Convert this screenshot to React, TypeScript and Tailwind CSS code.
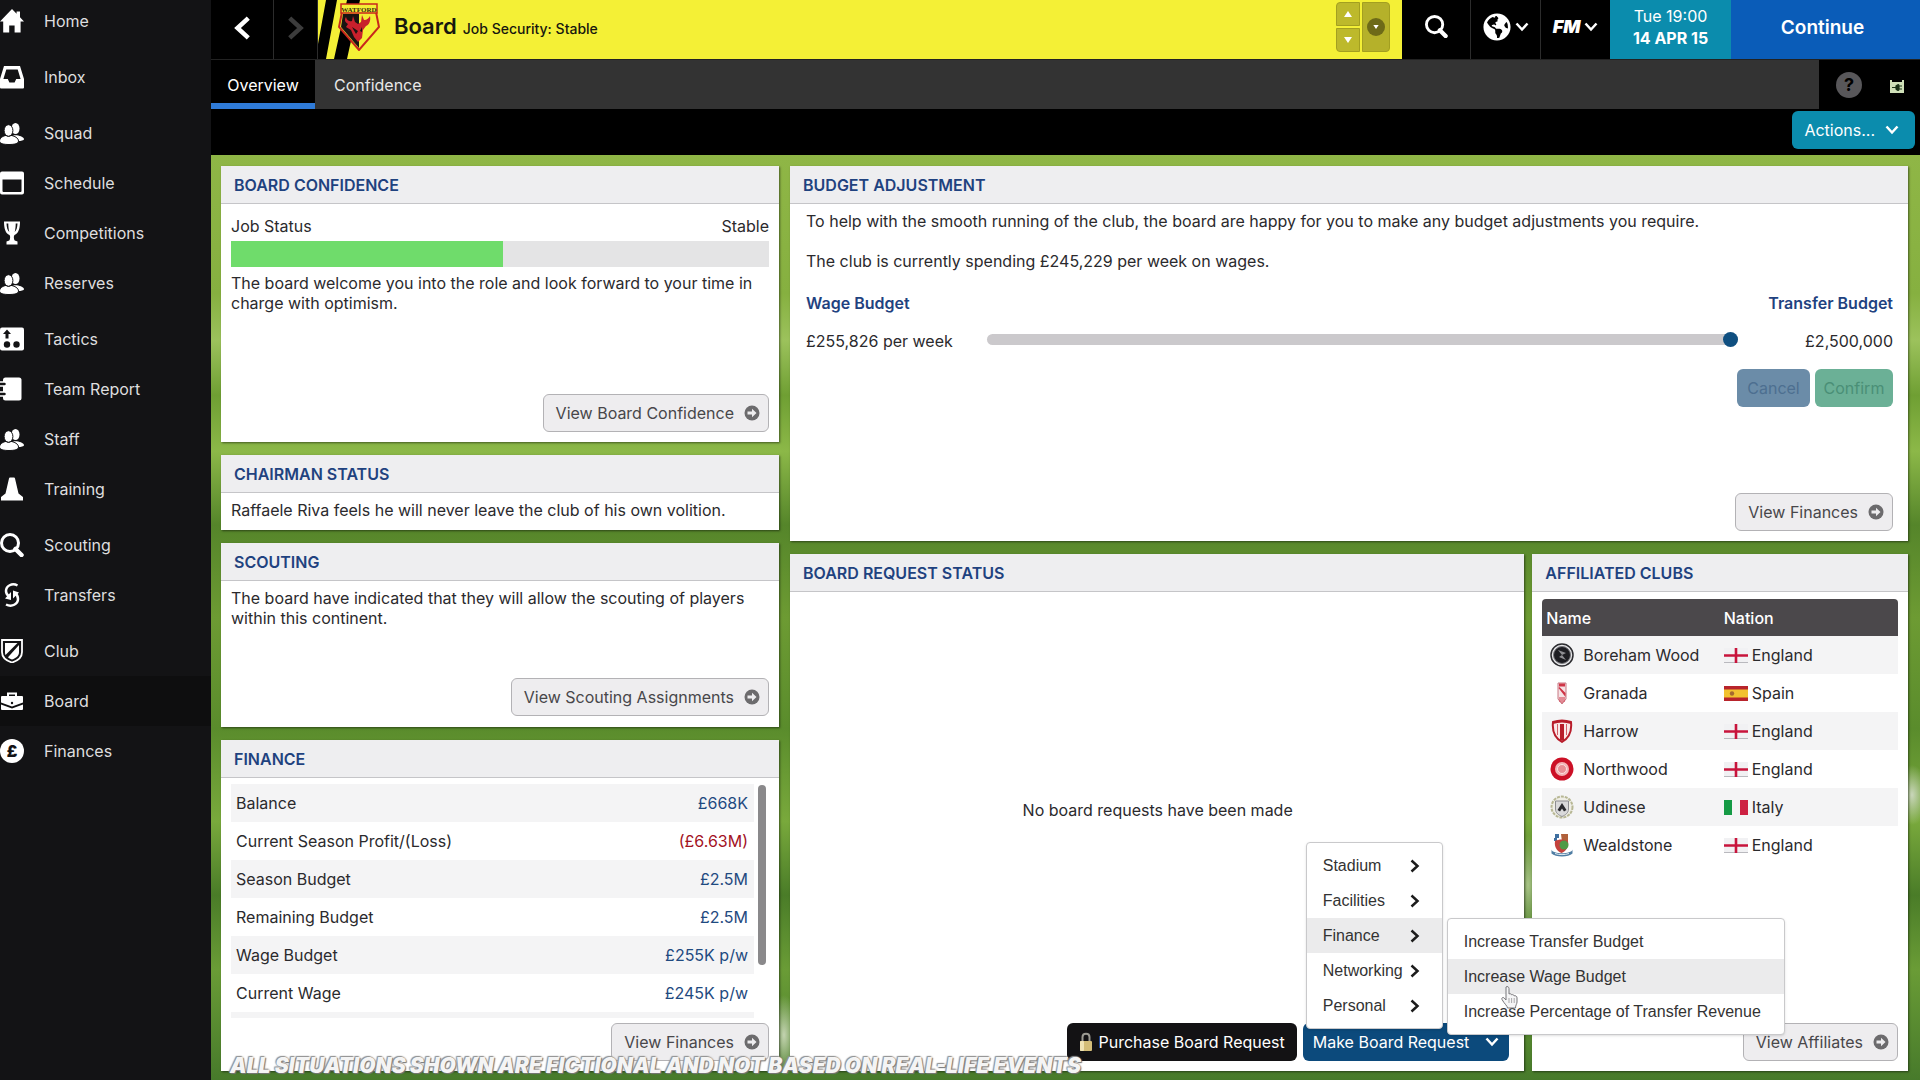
import React from 'react';
import clsx from 'clsx';
import { FaGlobeAmericas } from 'react-icons/fa';

interface IconProps {
    className?: string;
}

const HomeIcon = () => (
    <svg viewBox="0 0 24 24" className="h-6 w-6" fill="currentColor">
        <path d="M12 0 0 12.5h3.2V23.5h6v-7h5.4v7h6V12.5H24L20 8.2V2.5h-3.4v2.2z" />
    </svg>
);

const InboxIcon = () => (
    <svg viewBox="0 0 24 24" className="h-6 w-6" fill="currentColor" fillRule="evenodd">
        <path d="M4 1h16l4 13v8.5q0 1-1 1H1q-1 0-1-1V14zM6.3 4.5 3.4 14h4.4l1.6 3.4h5.2L16.2 14h4.4L17.7 4.5z" />
    </svg>
);

const PeopleIcon = () => (
    <svg viewBox="0 0 24 24" className="h-6 w-6" fill="currentColor">
        <ellipse cx="15.5" cy="7.5" rx="4" ry="5.5" />
        <path d="M13 14.5c4-1 10.5 1 11 3.5 0 1.6-3 2-6 2z" />
        <g stroke="#131315" strokeWidth="1">
            <ellipse cx="8.5" cy="9.5" rx="4.4" ry="5.8" />
            <path d="M-.5 20c0-3 3.5-5 6.5-5.6 1.5 1.4 3.5 1.4 5 0 3.5.6 7.5 2.6 7.5 5.6 0 2.6-4 3.5-9.5 3.5S-.5 22.6-.5 20z" />
        </g>
    </svg>
);

const CalendarIcon = () => (
    <svg viewBox="0 0 24 24" className="h-6 w-6" fill="currentColor" fillRule="evenodd">
        <path d="M2 .5h20q2 0 2 2v19q0 2-2 2H2q-2 0-2-2v-19q0-2 2-2zM2.5 8.5v11.5q0 1 1 1h17q1 0 1-1V8.5z" />
    </svg>
);

const TrophyIcon = () => (
    <svg viewBox="0 0 24 24" className="h-6 w-6" fill="currentColor" fillRule="evenodd">
        <path d="M4 .5h16c0 7-1.5 12-5.5 13.5-1 1-.8 4 .2 5.5l2.8 1V23.5h-11v-3l2.8-1c1-1.500 1.200-4.500.2-5.500C5.500 12.500 4 7.500 4 .5zM6.500 2.500c.2 4 1 7 2.800 8.500-.8-3-1-6-1-8.500zM15.700 2.500c0 2.500-.2 5.500-1 8.500 1.800-1.500 2.600-4.500 2.800-8.500z" />
    </svg>
);

const TacticsIcon = () => (
    <svg viewBox="0 0 24 24" className="h-6 w-6">
        <rect y=".5" width="24" height="23" rx="2" fill="currentColor" />
        <g fill="#131315">
            <path d="M7 2.500 11 7H8.500v4.500h-3V7H3z" />
            <circle cx="7" cy="17.5" r="3.2" />
            <circle cx="16.5" cy="17.5" r="3.2" />
        </g>
    </svg>
);

const ReportIcon = () => (
    <svg viewBox="0 0 24 24" className="h-6 w-6">
        <rect x="3" y=".5" width="18.5" height="23" rx="2.5" fill="currentColor" />
        <g fill="#131315" stroke="currentColor" strokeWidth="1.5">
            <rect x="-2" y="5" width="8.5" height="4" rx="2" />
            <rect x="-2" y="15" width="8.5" height="4" rx="2" />
        </g>
    </svg>
);

const ConeIcon = () => (
    <svg viewBox="0 0 24 24" className="h-6 w-6" fill="currentColor">
        <path d="M10 .5h4q.8 0 1 1l3.5 15 4.5 3.5v3.5H1V20l4.5-3.5L9 1.5q.2-1 1-1z" />
    </svg>
);

const SearchIcon = ({ className }: IconProps) => (
    <svg viewBox="0 0 24 24" className={className} fill="none" stroke="currentColor">
        <circle cx="10" cy="10" r="8.5" strokeWidth="3" />
        <path d="m15.5 16 6 6" strokeWidth="4.5" strokeLinecap="round" />
    </svg>
);

const TransferIcon = () => (
    <svg viewBox="0 0 24 24" className="h-6 w-6" fill="none" stroke="currentColor" strokeWidth="2.5">
        <path d="M17.5 2.5C12-.5 6 3 6 8c0 2.5 1 4 3 5.5" />
        <path d="M6 21.5c6 3 12-.5 12-5.5 0-3-1-4.5-3-6" />
        <path d="M5 15.5 11 17V9zM19 9.5 13 7.5v8z" fill="currentColor" stroke="none" />
    </svg>
);

const ShieldIcon = () => (
    <svg viewBox="0 0 24 24" className="h-6 w-6">
        <path d="M2 1h20v12c0 5-3.5 8.5-10 10.5C5.5 21.5 2 18 2 13z" fill="none" stroke="currentColor" strokeWidth="1.8" />
        <path d="M5 4h12.5L5.500 16C5 15 5 14 5 12.500z" fill="currentColor" />
        <path d="M19 6v7c0 4-3 6-7 7.500-2-.7-3-1.300-4-2.200z" fill="currentColor" />
    </svg>
);

const BriefcaseIcon = () => (
    <svg viewBox="0 0 24 24" className="h-6 w-6">
        <path d="M8 7V4.500h8V7" fill="none" stroke="currentColor" strokeWidth="2" />
        <path d="M2 7h20q1 0 1 1v5.500L12 17.500 1 13.500V8q0-1 1-1z" fill="currentColor" />
        <path d="M1 15.500 12 19.500 23 15.500V20q0 1-1 1H2q-1 0-1-1z" fill="currentColor" />
        <circle cx="12" cy="14" r="1.2" fill="#131315" />
    </svg>
);

const PoundIcon = () => (
    <span className="flex h-6 w-6 items-center justify-center rounded-full bg-current">
        <span className="font-black text-[#131315]">£</span>
    </span>
);

const Chevron = ({ className }: IconProps) => (
    <svg viewBox="0 0 14 10" className={className} fill="none" stroke="currentColor" strokeWidth="2.5">
        <path d="m1.500 1.500 5.500 6 5.500-6" />
    </svg>
);

const ArrowCircle = () => (
    <svg viewBox="0 0 16 16" className="h-4 w-4 shrink-0">
        <circle cx="8" cy="8" r="7.5" fill="#6c6b6d" />
        <path d="M3.500 6.500H8V3.800L12.500 8 8 12.200V9.500H3.500z" fill="#eeedef" />
    </svg>
);

const WatfordCrest = () => (
    <svg viewBox="0 0 42 48" className="h-12 w-[42px] shrink-0">
        <path d="M4 9h34l3 15-20 23L1 24z" fill="#f4ef35" stroke="#c8271c" strokeWidth="2" />
        <path d="M5 11h16v34L3 24z" fill="#1a1412" />
        <path d="M8 14c1 4 4 5 6 4l1-5 2 6 3 2 3-2 1-7 2 5c3 0 5-2 6-4 1 5-1 9-4 10l-3 4-1 8-4 4-4-5-3-7-5-3 2-3c-3-2-4-4-2-7z" fill="#c8202c" />
        <path d="M14 24l6 4-2 3zM24 24l-2 4 2 1z" fill="#1a1412" />
        <rect x="3" y="1" width="36" height="9" fill="#f4ef35" stroke="#c8271c" strokeWidth="1.5" />
        <text x="21" y="8.5" textAnchor="middle" fontSize="7" fontWeight="700" fontFamily="Liberation Serif, serif" fill="#3a2c10">
            WATFORD
        </text>
    </svg>
);

const Padlock = () => (
    <svg viewBox="0 0 14 20" className="h-5 w-[14px] shrink-0">
        <path d="M3.500 10V5c0-4.500 7-4.500 7 0v5" fill="none" stroke="#9b9a92" strokeWidth="2" />
        <rect x="1" y="9" width="12" height="10" rx="1" fill="#d3bd78" />
        <rect x="1" y="9" width="4" height="10" rx="1" fill="#efe3b4" />
    </svg>
);

const HandCursor = () => (
    <svg viewBox="0 0 20 24" className="pointer-events-none absolute top-[26px] left-[52px] z-10 h-6 w-5">
        <path
            d="M6 2c1.200-1.200 3 0 3 1.500V9c1-.6 2.300-.2 2.600.8 1-.5 2.300 0 2.500 1 1.300-.4 2.900.3 2.900 2V17c0 2-1.500 3-1.500 6H7.500c0-2-3-4-5.500-8.500-.8-1.500 1-2.800 2.200-1.500L6 15z"
            fill="#f5f5f6"
            stroke="#77767a"
            strokeWidth="1"
        />
        <path d="M9 13v5M11.600 13v5M14.200 13v5" stroke="#aaa9ac" strokeWidth="1" />
    </svg>
);

const navGroups = [
    [{ label: 'Home', icon: <HomeIcon /> }],
    [{ label: 'Inbox', icon: <InboxIcon /> }],
    [
        { label: 'Squad', icon: <PeopleIcon /> },
        { label: 'Schedule', icon: <CalendarIcon /> },
        { label: 'Competitions', icon: <TrophyIcon /> },
        { label: 'Reserves', icon: <PeopleIcon /> },
    ],
    [
        { label: 'Tactics', icon: <TacticsIcon /> },
        { label: 'Team Report', icon: <ReportIcon /> },
        { label: 'Staff', icon: <PeopleIcon /> },
        { label: 'Training', icon: <ConeIcon /> },
    ],
    [
        { label: 'Scouting', icon: <SearchIcon className="h-6 w-6" /> },
        { label: 'Transfers', icon: <TransferIcon /> },
    ],
    [
        { label: 'Club', icon: <ShieldIcon /> },
        { label: 'Board', icon: <BriefcaseIcon />, active: true },
        { label: 'Finances', icon: <PoundIcon /> },
    ],
];

const Sidebar = () => (
    <nav className="-mt-1 flex w-[211px] shrink-0 flex-col gap-[6px]">
        {navGroups.map((group, i) => (
            <ul key={i}>
                {group.map((item) => (
                    <li key={item.label}>
                        <a
                            href="#"
                            className={clsx(
                                'flex h-[50px] items-center gap-5 text-[#dededf]',
                                'active' in item && 'bg-[#0e0e0f]'
                            )}
                        >
                            <span className="text-white">{item.icon}</span>
                            {item.label}
                        </a>
                    </li>
                ))}
            </ul>
        ))}
    </nav>
);

const TopBar = () => (
    <header className="flex h-[59px] bg-black text-white">
        <button aria-label="Back" className="flex w-[63px] items-center justify-center border-r border-[#2c2c2c] pb-1">
            <Chevron className="h-[18px] w-[26px] shrink-0 rotate-90" />
        </button>
        <button aria-label="Forward" className="flex w-11 items-center justify-center border-r border-[#2c2c2c] pb-1 text-[#3c3c3c]">
            <Chevron className="h-[18px] w-[26px] shrink-0 -rotate-90" />
        </button>
        <div className="relative flex flex-1 items-center bg-[#f4f036] text-[#17170f]">
            <svg viewBox="0 0 44 59" className="absolute top-0 left-0 h-full w-11">
                <path d="M8 0h11L8 59H0V44zM29 0h13L29 59H16z" fill="#000" />
            </svg>
            <div className="relative ml-5 flex flex-1 items-center gap-[14px] pb-[6px]">
                <WatfordCrest />
                <div className="flex items-baseline gap-[6px]">
                    <h1 className="text-[22px] font-semibold">Board</h1>
                    <p className="text-sm font-medium">Job Security: Stable</p>
                </div>
            </div>
            <div className="mr-3 flex gap-[2px] pb-[6px]">
                <div className="flex flex-col gap-[2px]">
                    <button aria-label="Previous club" className="flex h-6 w-6 items-center justify-center rounded-tl border border-[#a39f20] bg-[#bdb92b]">
                        <svg viewBox="0 0 8 6" className="h-[6px] w-2" fill="#fff"><path d="M4 0 8 6H0z" /></svg>
                    </button>
                    <button aria-label="Next club" className="flex h-6 w-6 items-center justify-center rounded-bl border border-[#a39f20] bg-[#bdb92b]">
                        <svg viewBox="0 0 8 6" className="h-[6px] w-2" fill="#fff"><path d="M4 6 8 0H0z" /></svg>
                    </button>
                </div>
                <button aria-label="Club list" className="flex w-7 items-center justify-center rounded-r border border-[#a39f20] bg-[#b5b12a]">
                    <span className="flex h-[18px] w-[18px] items-center justify-center rounded-full bg-[#6d6a18]">
                        <svg viewBox="0 0 8 6" className="h-1 w-[6px]" fill="#fff"><path d="M4 6 8 0H0z" /></svg>
                    </span>
                </button>
            </div>
        </div>
        <button aria-label="Search" className="flex w-[69px] items-center justify-center border-r border-[#2c2c2c] pb-[6px]">
            <SearchIcon className="h-[23px] w-[23px]" />
        </button>
        <button aria-label="World" className="flex w-[70px] items-center justify-center gap-1 border-r border-[#2c2c2c] pb-[6px]">
            <FaGlobeAmericas size={28} />
            <Chevron className="h-[10px] w-[14px]" />
        </button>
        <button aria-label="FM menu" className="flex w-[69px] items-center justify-center gap-1 pb-[6px]">
            <span className="text-lg font-black italic">FM</span>
            <Chevron className="h-[10px] w-[14px]" />
        </button>
        <div className="flex w-[121px] flex-col items-center justify-center bg-[#0b8cad] pb-[6px] leading-[22px]">
            <span>Tue 19:00</span>
            <span className="font-bold">14 APR 15</span>
        </div>
        <button className="w-[189px] bg-[#0a5cb8] pr-[6px] pb-[2px] text-[19px] font-semibold">Continue</button>
    </header>
);

const TabBar = () => (
    <div className="flex h-[50px] border-t border-[#222] bg-[#333] text-white">
        <a href="#" className="flex w-[104px] items-center justify-center border-b-6 border-[#2f7bd8] bg-black pt-[6px]">
            Overview
        </a>
        <a href="#" className="flex items-center px-[19px] text-[#e8e8e8]">
            Confidence
        </a>
        <div className="ml-auto flex w-[101px] items-center justify-end gap-[27px] bg-black pr-[15px]">
            <button aria-label="Help" className="h-[26px] w-[26px] rounded-full bg-[#58575a] text-lg leading-none font-bold text-black">
                ?
            </button>
            <svg viewBox="0 0 16 13" className="mt-1 h-[13px] w-4">
                <path d="M1 0h2v2h10V0h2v13H1z" fill="#cfe0b8" />
                <path d="M3 7.500h4M7 6q3-3 3 0v3q0 3-3 0zM10 6h3M10 9h3" stroke="#1b3317" strokeWidth="1.2" fill="#1b3317" />
            </svg>
        </div>
    </div>
);

interface PanelProps {
    title: string;
    className?: string;
    children: React.ReactNode;
}

const Panel = ({ title, className, children }: PanelProps) => (
    <section className={clsx('flex flex-col bg-white shadow-[1px_1px_2px_rgba(0,0,0,0.5)]', className)}>
        <h2 className="flex h-[38px] shrink-0 items-center border-b border-[#c5c5c8] bg-[#eeeef0] px-[13px] pt-px font-semibold text-[#1f427f]">
            {title}
        </h2>
        {children}
    </section>
);

const ViewButton = ({ children }: { children: React.ReactNode }) => (
    <button className="flex h-[38px] items-center gap-[10px] self-end rounded-md border border-[#b3b2b5] bg-[#eeedef] pr-2 pl-3 text-[#48474a]">
        {children}
        <ArrowCircle />
    </button>
);

const finances = [
    { label: 'Balance', value: '£668K' },
    { label: 'Current Season Profit/(Loss)', value: '(£6.63M)', loss: true },
    { label: 'Season Budget', value: '£2.5M' },
    { label: 'Remaining Budget', value: '£2.5M' },
    { label: 'Wage Budget', value: '£255K p/w' },
    { label: 'Current Wage', value: '£245K p/w' },
];

const FinancePanel = () => (
    <Panel title="FINANCE" className="flex-1">
        <div className="flex flex-1 flex-col px-[10px] pt-[6px] pb-[10px]">
            <div className="flex gap-1">
                <div className="flex-1">
                    <table className="w-full">
                        <tbody>
                            {finances.map(({ label, value, loss }) => (
                                <tr key={label} className="h-[38px] odd:bg-[#f4f4f5]">
                                    <th className="px-[5px] text-left font-normal">{label}</th>
                                    <td className={clsx('px-[6px] text-right', loss ? 'text-[#a3121f]' : 'text-[#1f4a80]')}>
                                        {value}
                                    </td>
                                </tr>
                            ))}
                        </tbody>
                    </table>
                    <div className="h-[6px] bg-[#f4f4f5]" />
                </div>
                <div className="w-[11px] py-px">
                    <div className="h-[180px] w-2 rounded-full bg-[#8a898b]" />
                </div>
            </div>
            <div className="mt-auto flex justify-end">
                <ViewButton>View Finances</ViewButton>
            </div>
        </div>
    </Panel>
);

const BudgetPanel = () => (
    <Panel title="BUDGET ADJUSTMENT" className="min-h-[375px]">
        <div className="flex flex-1 flex-col pt-[7px] pr-[15px] pb-[10px] pl-4">
            <p className="leading-5">To help with the smooth running of the club, the board are happy for you to make any budget adjustments you require.</p>
            <p className="mt-5 leading-5">The club is currently spending £245,229 per week on wages.</p>
            <div className="mt-[22px] flex justify-between leading-5 font-semibold text-[#1f427f]">
                <label htmlFor="budget">Wage Budget</label>
                <span>Transfer Budget</span>
            </div>
            <div className="mt-[18px] flex items-center leading-5">
                <span className="w-[181px]">£255,826 per week</span>
                <input
                    id="budget"
                    type="range"
                    min={0}
                    max={100}
                    defaultValue={100}
                    className="mb-1 h-[15px] flex-1 appearance-none bg-transparent [&::-webkit-slider-runnable-track]:h-[11px] [&::-webkit-slider-runnable-track]:rounded-full [&::-webkit-slider-runnable-track]:bg-[#cbc9cc] [&::-webkit-slider-thumb]:-mt-[2px] [&::-webkit-slider-thumb]:h-[15px] [&::-webkit-slider-thumb]:w-[15px] [&::-webkit-slider-thumb]:appearance-none [&::-webkit-slider-thumb]:rounded-full [&::-webkit-slider-thumb]:bg-[#0f4f80]"
                />
                <span className="w-[155px] text-right">£2,500,000</span>
            </div>
            <div className="mt-[18px] flex justify-end gap-[5px] text-center">
                <button disabled className="h-[38px] w-[73px] rounded-md bg-[#6b8ca8] text-[#4d6f90]">Cancel</button>
                <button disabled className="h-[38px] w-[78px] rounded-md bg-[#6bb096] text-[#4a8f76]">Confirm</button>
            </div>
            <div className="mt-auto flex justify-end">
                <ViewButton>View Finances</ViewButton>
            </div>
        </div>
    </Panel>
);

const requestTypes = ['Stadium', 'Facilities', 'Finance', 'Networking', 'Personal'];
const financeRequests = ['Increase Transfer Budget', 'Increase Wage Budget', 'Increase Percentage of Transfer Revenue'];

const RequestMenu = () => (
    <ul className="absolute bottom-8 left-[3px] z-20 w-[137px] rounded border border-[#c9c9cb] bg-white py-[5px] font-['Liberation_Sans',sans-serif] text-[#333] shadow-sm">
        {requestTypes.map((type) => (
            <li key={type} className={clsx('relative', type === 'Finance' && 'bg-[#ebebec]')}>
                <button className="flex h-[35px] w-full items-center justify-between pr-6 pl-4">
                    {type}
                    <Chevron className="-mx-1 h-[10px] w-[14px] shrink-0 -rotate-90 text-[#1c1c1c]" />
                </button>
                {type === 'Finance' && (
                    <ul className="absolute top-0 left-full ml-[5px] w-[338px] rounded border border-[#c9c9cb] bg-white py-[5px] shadow-sm">
                        {financeRequests.map((request) => (
                            <li key={request} className={clsx('relative', request === 'Increase Wage Budget' && 'bg-[#ebebec]')}>
                                <button className="flex h-[35px] w-full items-center pl-4 whitespace-nowrap">{request}</button>
                                {request === 'Increase Wage Budget' && <HandCursor />}
                            </li>
                        ))}
                    </ul>
                )}
            </li>
        ))}
    </ul>
);

const RequestPanel = () => (
    <Panel title="BOARD REQUEST STATUS" className="flex-[735]">
        <div className="flex flex-1 flex-col pr-[15px] pb-[10px] pl-4">
            <p className="flex flex-1 items-center justify-center pt-1">No board requests have been made</p>
            <div className="flex justify-end gap-[6px] text-white">
                <button className="flex h-[38px] items-center gap-[6px] rounded-md bg-[#131214] px-3">
                    <Padlock />
                    Purchase Board Request
                </button>
                <div className="relative">
                    <button className="flex h-[38px] items-center gap-4 rounded-md bg-[#0c4a7c] px-[10px]">
                        Make Board Request
                        <Chevron className="h-[10px] w-[14px]" />
                    </button>
                    <RequestMenu />
                </div>
            </div>
        </div>
    </Panel>
);

const BorehamCrest = () => (
    <svg viewBox="0 0 24 24" className="h-6 w-6">
        <circle cx="12" cy="12" r="11" fill="#e6e6e8" stroke="#2c2c30" strokeWidth="1.5" />
        <circle cx="12" cy="12" r="8.5" fill="#1d1d22" stroke="#77777c" />
        <path d="m8 7 8 3-4 2 4 5-7-3 3-2z" fill="#8e8e93" />
    </svg>
);

const GranadaCrest = () => (
    <svg viewBox="0 0 24 24" className="h-6 w-6">
        <path d="M8 2h8v16l-4 5-4-5z" fill="#f6e3e5" stroke="#c77782" />
        <path d="M9 2.500h6v3H9zM8.500 7l7 9v-4l-6-6z" fill="#cf3547" />
        <path d="M10 16v5M12 16v6M14 16v5" stroke="#cf3547" />
    </svg>
);

const HarrowCrest = () => (
    <svg viewBox="0 0 24 24" className="h-6 w-6">
        <path d="M3 3c6-2 12-2 18 0 1 9-2 16-9 20C5 19 2 12 3 3z" fill="#fbe9e9" stroke="#b81d2b" strokeWidth="2" />
        <path d="M3 5c6-2 12-2 18 0V2.500C15 1 9 1 3 2.500z" fill="#b81d2b" />
        <path d="M10 5h4v16l-2 1-2-1z" fill="#b81d2b" />
        <path d="M7.500 5v11M16.500 5v11" stroke="#d4606a" />
    </svg>
);

const NorthwoodCrest = () => (
    <svg viewBox="0 0 24 24" className="h-6 w-6">
        <circle cx="12" cy="12" r="11.5" fill="#cc1026" />
        <circle cx="12" cy="12" r="7" fill="#f3b3b6" />
        <circle cx="12" cy="12" r="4.5" fill="#e88f95" stroke="#fbe0e0" />
    </svg>
);

const UdineseCrest = () => (
    <svg viewBox="0 0 24 24" className="h-6 w-6">
        <circle cx="12" cy="12" r="10.5" fill="#efeee6" stroke="#b7b794" strokeWidth="2" strokeDasharray="3 1" />
        <path d="M5.500 6h13v8c0 4-3 6-6.500 7.500C8.500 20 5.500 18 5.500 14z" fill="#d9d9da" stroke="#8d8d90" />
        <path d="m12 8 4.500 7-2.500 1.500L12 13.500l-2 3L7.500 15z" fill="#2b2b2f" />
    </svg>
);

const WealdstoneCrest = () => (
    <svg viewBox="0 0 24 24" className="h-6 w-6">
        <path d="M5 1h4v4H5zM4 5h3v3H4z" fill="#3f6fa0" />
        <path d="M11 1h7v7l-6 1z" fill="#b0603a" />
        <path d="M5 8c4-2 9-2 13 0 1 6-2 10-6.500 12C7 18 4 14 5 8z" fill="#c4413c" />
        <circle cx="14" cy="12" r="4.5" fill="#4f9a45" />
        <path d="M1.500 16.500c1 5 20 5 21 0v4c-4 4-17 4-21 0z" fill="#4f7da3" />
        <path d="M5 20.500c4 1.500 10 1.500 14 0" stroke="#dfe9f0" fill="none" />
    </svg>
);

const flags = {
    England: (
        <svg viewBox="0 0 24 15" className="h-[15px] w-6">
            <path d="M0 0h24v15H0z" fill="#f1f1f3" />
            <path d="M0 14.500h24" stroke="#b9b9be" />
            <path d="M12 0v15M0 7.500h24" stroke="#c8143c" strokeWidth="2.6" />
        </svg>
    ),
    Spain: (
        <svg viewBox="0 0 24 15" className="h-[15px] w-6">
            <path d="M0 0h24v15H0z" fill="#b8242c" />
            <path d="M0 3.500h24v8H0z" fill="#f2c230" />
            <circle cx="8" cy="7.5" r="2.2" fill="#a5692f" />
        </svg>
    ),
    Italy: (
        <svg viewBox="0 0 24 15" className="h-[15px] w-6">
            <path d="M0 0h8v15H0z" fill="#159a45" />
            <path d="M8 0h8v15H8z" fill="#f4f4f4" />
            <path d="M16 0h8v15h-8z" fill="#cd2142" />
        </svg>
    ),
};

const clubs: { name: string; nation: keyof typeof flags; crest: React.ReactNode }[] = [
    { name: 'Boreham Wood', nation: 'England', crest: <BorehamCrest /> },
    { name: 'Granada', nation: 'Spain', crest: <GranadaCrest /> },
    { name: 'Harrow', nation: 'England', crest: <HarrowCrest /> },
    { name: 'Northwood', nation: 'England', crest: <NorthwoodCrest /> },
    { name: 'Udinese', nation: 'Italy', crest: <UdineseCrest /> },
    { name: 'Wealdstone', nation: 'England', crest: <WealdstoneCrest /> },
];

const AffiliatesPanel = () => (
    <Panel title="AFFILIATED CLUBS" className="flex-[376]">
        <div className="flex flex-1 flex-col px-[10px] pt-[7px] pb-[10px]">
            <table className="w-full table-fixed">
                <thead>
                    <tr className="h-[37px] bg-[#4b484b] text-left text-white">
                        <th className="w-[51%] rounded-tl px-1 font-medium">Name</th>
                        <th className="rounded-tr font-medium">Nation</th>
                    </tr>
                </thead>
                <tbody>
                    {clubs.map(({ name, nation, crest }) => (
                        <tr key={name} className="h-[38px] odd:bg-[#f4f4f5]">
                            <td className="pl-2">
                                <span className="flex items-center gap-[9px]">
                                    {crest}
                                    {name}
                                </span>
                            </td>
                            <td>
                                <span className="flex items-center gap-1">
                                    {flags[nation]}
                                    {nation}
                                </span>
                            </td>
                        </tr>
                    ))}
                </tbody>
            </table>
            <div className="mt-auto flex justify-end">
                <ViewButton>View Affiliates</ViewButton>
            </div>
        </div>
    </Panel>
);

const App: React.FC = () => (
    <div className="relative flex min-h-screen overflow-hidden bg-[#131315] font-[Inter,sans-serif] text-base text-[#2b2a2d]">
        <Sidebar />
        <div className="flex min-w-0 flex-1 flex-col">
            <TopBar />
            <TabBar />
            <div className="flex h-[46px] items-start justify-end bg-black pt-[2px] pr-[5px]">
                <button className="flex h-[38px] items-center gap-[10px] rounded-md bg-[#0b8cad] pr-4 pl-3 text-white">
                    Actions...
                    <Chevron className="h-[10px] w-[14px]" />
                </button>
            </div>
            <main className="grid flex-1 grid-cols-[558fr_1118fr] gap-[11px] bg-[radial-gradient(ellipse_14px_40px_at_573px_880px,#c3d3b0,transparent),radial-gradient(ellipse_14px_50px_at_1317px_730px,#a9c487,transparent),radial-gradient(ellipse_16px_30px_at_1701px_640px,#c9d6ba,transparent),linear-gradient(180deg,#8fb646_0%,#86b040_15%,#9cc25c_20%,#6f9f33_26%,#8cb848_32%,#55852a_40%,#6d9b33_50%,#5a8c2c_62%,#79a93c_72%,#4a7c28_80%,#6a9c36_88%,#477a2b_100%)] pt-[11px] pr-3 pb-[9px] pl-[10px]">
                <div className="flex flex-col gap-[13px]">
                    <Panel title="BOARD CONFIDENCE" className="min-h-[276px]">
                        <div className="flex flex-1 flex-col px-[10px] pt-[12px] pb-[10px]">
                            <div className="flex justify-between leading-5">
                                <span>Job Status</span>
                                <span>Stable</span>
                            </div>
                            <div className="mt-[5px] h-[26px] bg-[#e4e4e5]">
                                <div className="h-full w-[50.5%] bg-[#6fdc6b]" />
                            </div>
                            <p className="mt-[6px] leading-5">
                                The board welcome you into the role and look forward to your time in charge with optimism.
                            </p>
                            <div className="mt-auto flex justify-end">
                                <ViewButton>View Board Confidence</ViewButton>
                            </div>
                        </div>
                    </Panel>
                    <Panel title="CHAIRMAN STATUS" className="min-h-[75px]">
                        <p className="px-[10px] py-[7px] leading-5">Raffaele Riva feels he will never leave the club of his own volition.</p>
                    </Panel>
                    <Panel title="SCOUTING" className="min-h-[184px]">
                        <div className="flex flex-1 flex-col px-[10px] pt-[7px] pb-[11px]">
                            <p className="leading-5">
                                The board have indicated that they will allow the scouting of players within this continent.
                            </p>
                            <div className="mt-auto flex justify-end">
                                <ViewButton>View Scouting Assignments</ViewButton>
                            </div>
                        </div>
                    </Panel>
                    <FinancePanel />
                </div>
                <div className="flex flex-col gap-[13px]">
                    <BudgetPanel />
                    <div className="flex flex-1 gap-2">
                        <RequestPanel />
                        <AffiliatesPanel />
                    </div>
                </div>
            </main>
        </div>
        <p className="pointer-events-none absolute bottom-0 left-[230px] text-[21px] leading-7 font-black whitespace-nowrap text-[#f4f4f4] italic [text-shadow:0_0_2px_#777,1px_1px_1px_#777,-1px_-1px_1px_#999]">
            ALL SITUATIONS SHOWN ARE FICTIONAL AND NOT BASED ON REAL-LIFE EVENTS
        </p>
    </div>
);

export default App;
